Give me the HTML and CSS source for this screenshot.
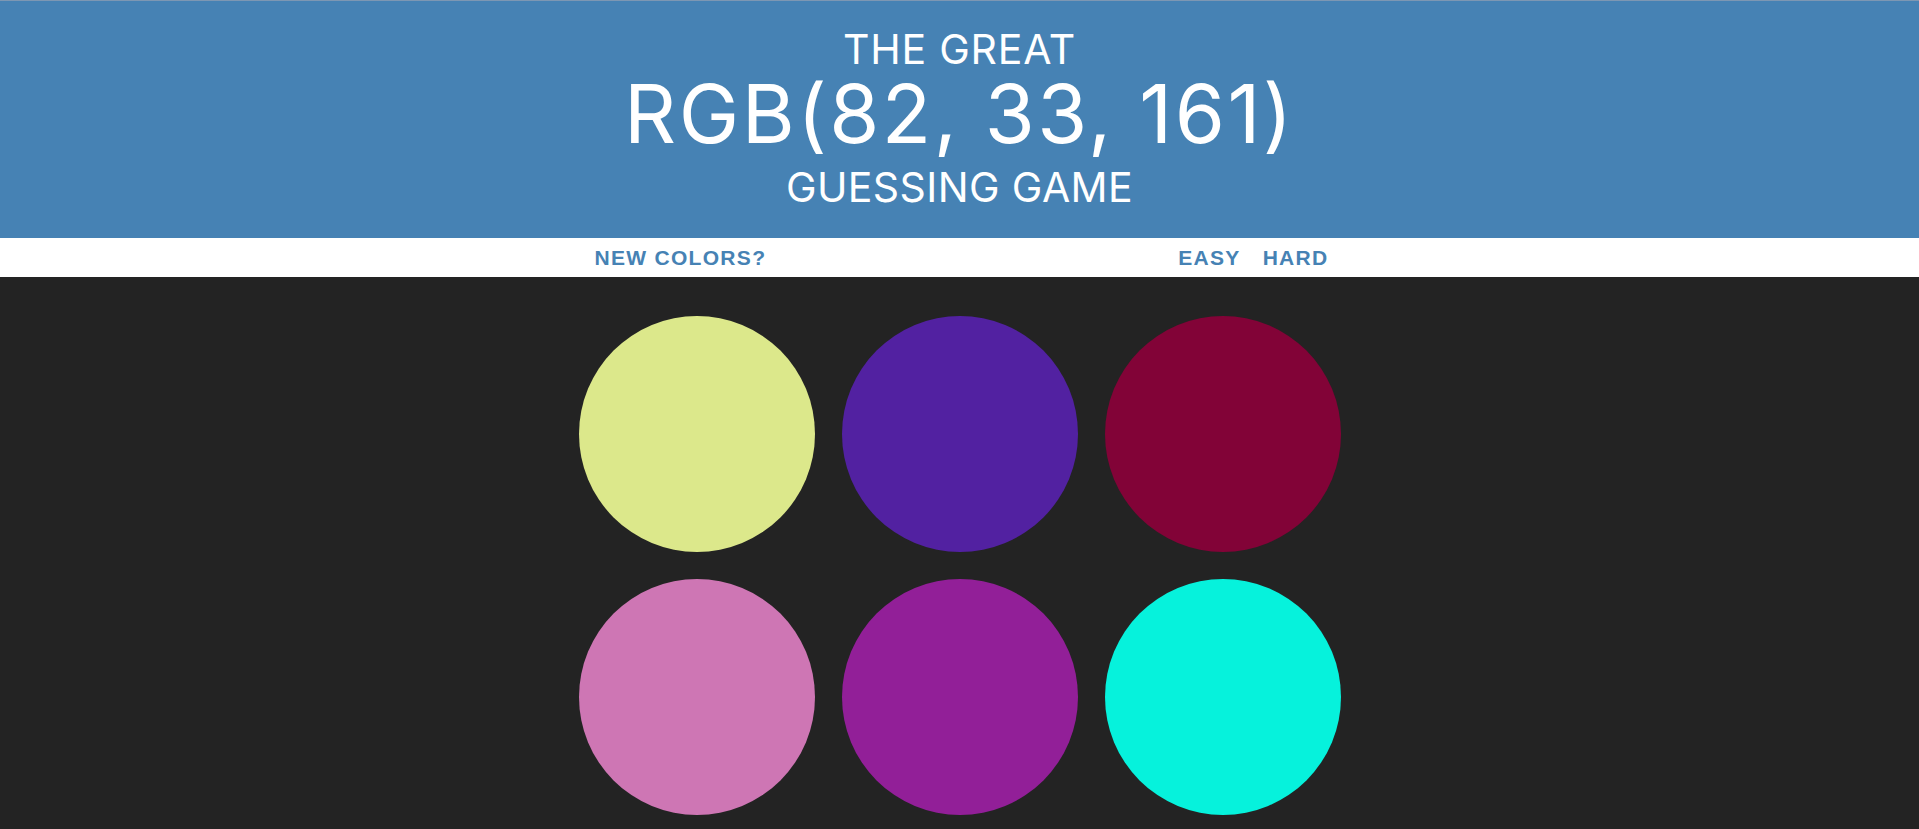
FILE: index.html
```html
<!DOCTYPE html>
<html lang="en">
<head>
<meta charset="utf-8">
<title>Color Game</title>
<link rel="stylesheet" href="styles.css">
</head>
<body>
  <header class="title">
    <span class="title-top">The Great</span>
    <span class="color-display">RGB(82, 33, 161)</span>
    <span class="title-bottom">Guessing Game</span>
  </header>
  <nav class="stripe">
    <button class="btn reset">New Colors?</button>
    <span class="message"></span>
    <button class="btn mode">Easy</button>
    <button class="btn mode">Hard</button>
  </nav>
  <main class="board">
    <div class="square" style="background: rgb(220, 232, 139)"></div>
    <div class="square" style="background: rgb(82, 33, 161)"></div>
    <div class="square" style="background: rgb(130, 3, 55)"></div>
    <div class="square" style="background: rgb(206, 118, 180)"></div>
    <div class="square" style="background: rgb(146, 31, 152)"></div>
    <div class="square" style="background: rgb(6, 242, 220)"></div>
  </main>
</body>
</html>
```
FILE: styles.css
```css
html, body {
  margin: 0;
  padding: 0;
}

body {
  background: #232323;
  overflow: hidden;
}

.title {
  display: flex;
  flex-direction: column;
  align-items: center;
  background: #4682b4;
  border-top: 1px solid #7d97b3;
  color: #fff;
  text-transform: uppercase;
  font-family: Inter, "Liberation Sans", sans-serif;
  font-weight: 400;
  padding: 25px 0 0;
  height: 238px;
  box-sizing: border-box;
}

.title-top,
.title-bottom {
  font-size: 41px;
  line-height: 46px;
}

.title-top {
  letter-spacing: 0.8px;
}

.title-bottom {
  margin-top: 7px;
  letter-spacing: 0.4px;
}

.color-display {
  font-size: 81px;
  line-height: 85px;
  letter-spacing: 2.5px;
}

.stripe {
  display: flex;
  justify-content: center;
  align-items: stretch;
  height: 39px;
  padding-left: 4px;
  background: #fff;
}

.btn {
  border: none;
  background: none;
  padding: 0 11px;
  margin: 0;
  font-family: "Liberation Sans", Arial, sans-serif;
  font-size: 21px;
  font-weight: 700;
  letter-spacing: 1.3px;
  text-transform: uppercase;
  color: #4682b4;
  line-height: 39px;
}

.message {
  width: 390px;
}

.board {
  display: grid;
  grid-template-columns: repeat(3, 236px);
  grid-auto-rows: 236px;
  gap: 27px;
  justify-content: center;
  padding-top: 39px;
}

.square {
  border-radius: 50%;
}
```
